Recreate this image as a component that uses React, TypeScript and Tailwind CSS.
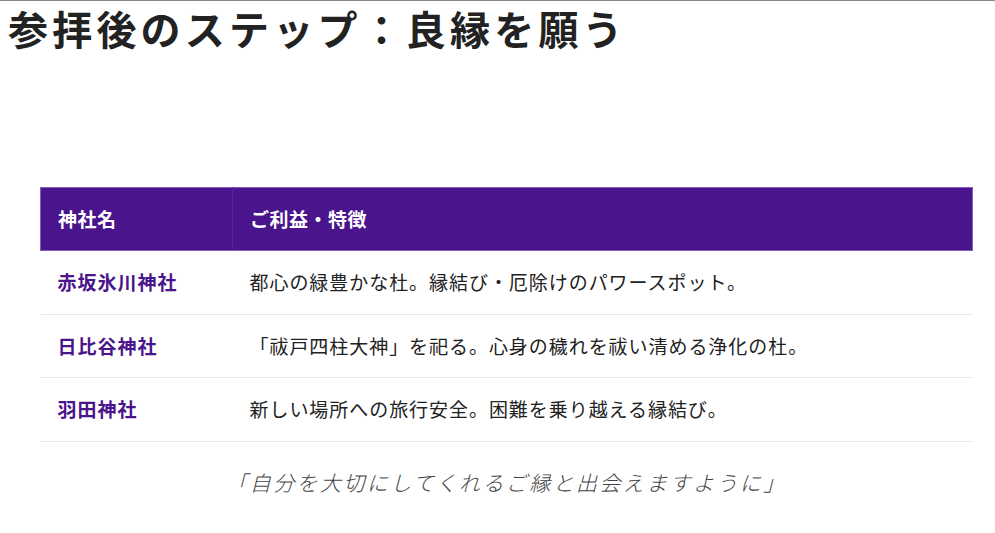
import React from "react";

const rows = [
  { name: "赤坂氷川神社", desc: "都心の緑豊かな杜。縁結び・厄除けのパワースポット。" },
  { name: "日比谷神社", desc: "「祓戸四柱大神」を祀る。心身の穢れを祓い清める浄化の杜。" },
  { name: "羽田神社", desc: "新しい場所への旅行安全。困難を乗り越える縁結び。" },
];

export default function App() {
  return (
    <div
      className="w-[995px] h-[533px] bg-white overflow-hidden"
      style={{ fontFamily: '"Noto Sans CJK JP", "Noto Sans", sans-serif' }}
    >
      <div className="h-px bg-[#8a8a8a]" />
      <h1 className="pl-[8px] pt-[3px] text-[40px] leading-[48px] font-bold tracking-[4.2px] text-[#222]">
        参拝後のステップ：良縁を願う
      </h1>
      <div className="px-[40px] pt-[135px] w-[973px] box-content">
        <table className="w-[933px] border-collapse">
          <thead>
            <tr className="bg-[#4a148c] text-white">
              <th className="w-[192px] h-[63px] text-left pl-[17px] text-[19px] font-bold tracking-[0.5px] border border-[#8a5cc0] border-r-[#55219a]">
                神社名
              </th>
              <th className="text-left pl-[17px] text-[19px] font-bold tracking-[0.5px] border border-[#8a5cc0] border-l-0">
                ご利益・特徴
              </th>
            </tr>
          </thead>
          <tbody>
            {rows.map((r) => (
              <tr key={r.name} className="border-b border-[#e8e8e8]">
                <td className="h-[63.5px] pl-[17px] text-[19px] font-bold text-[#4a148c] tracking-[1px]">
                  {r.name}
                </td>
                <td className="pl-[17px] text-[19px] text-[#222] tracking-[0.95px]">{r.desc}</td>
              </tr>
            ))}
          </tbody>
        </table>
        <p className="mt-[25px] text-center italic font-light text-[21px] tracking-[2.4px] text-[#444] w-[933px]">
          「自分を大切にしてくれるご縁と出会えますように」
        </p>
      </div>
    </div>
  );
}
